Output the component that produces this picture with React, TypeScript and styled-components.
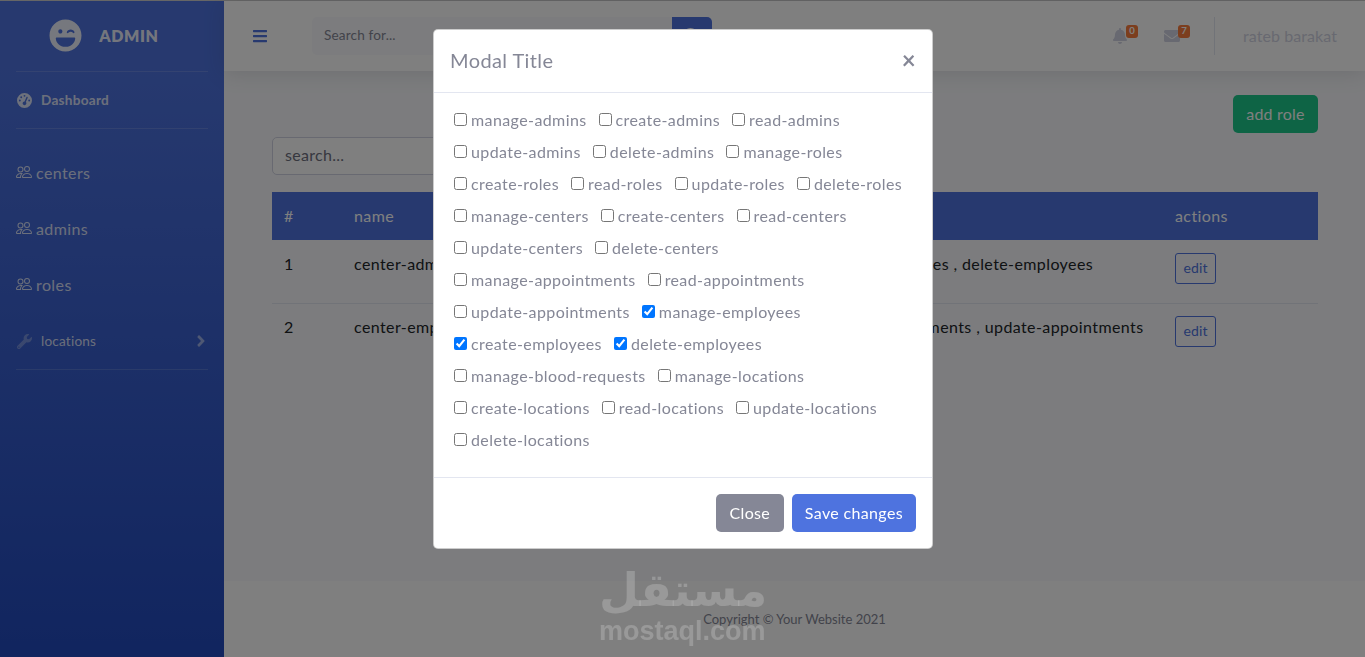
import React from "react";
import styled, { createGlobalStyle } from "styled-components";
import { FaAngleRight, FaBars, FaBell, FaEnvelope, FaLaughWink, FaSearch, FaWrench } from "react-icons/fa";
import { FaGaugeHigh } from "react-icons/fa6";
import { BsPeople } from "react-icons/bs";

const GlobalStyle = createGlobalStyle`
    html, body {
        margin: 0;
        height: 100%;
        overflow: hidden;
        font-family: "Lato", "Noto Sans", "Liberation Sans", sans-serif;
        font-size: 16px;
        letter-spacing: 0.4px;
        color: #858796;
        background: #f8f9fc;
    }
    * {
        box-sizing: border-box;
    }
`;

const Wrapper = styled.div`
    display: flex;
    height: 657px;
    border-top: 1px solid #ccc;
`;

const Sidebar = styled.aside`
    width: 224px;
    flex-shrink: 0;
    padding: 0 16px;
    background: linear-gradient(180deg, #4e73df 10%, #224abe 100%);
    color: rgba(255, 255, 255, 0.8);
`;

const Brand = styled.div`
    height: 70px;
    display: flex;
    align-items: center;
    justify-content: center;
    gap: 17px;
    color: rgba(255, 255, 255, 0.9);
    font-size: 16px;
    font-weight: 800;
    letter-spacing: 0.6px;
    padding: 0 16px 2px 0;
`;

const Divider = styled.hr`
    margin: 0;
    border: 0;
    border-top: 1px solid rgba(255, 255, 255, 0.15);
`;

const DashboardItem = styled.div`
    height: 56px;
    display: flex;
    align-items: center;
    gap: 9px;
    padding-left: 1px;
    font-size: 13.6px;
    font-weight: 700;
    letter-spacing: 0.25px;
`;

const NavGroup = styled.nav`
    padding-top: 16px;
`;

const NavItem = styled.div`
    height: 56px;
    display: flex;
    align-items: center;
    gap: 4px;
    padding-bottom: 2px;
    font-size: 16px;
`;

const SmallNavItem = styled(NavItem)`
    font-size: 13.6px;
    gap: 9px;
    padding: 0 0 0 1px;
    letter-spacing: 0.2px;
`;

const DimWrench = styled(FaWrench)`
    color: rgba(255, 255, 255, 0.3);
`;

const NavChevron = styled(FaAngleRight)`
    margin-left: auto;
    margin-right: -2px;
    color: rgba(255, 255, 255, 0.5);
`;

const Main = styled.div`
    flex: 1;
    min-width: 0;
    display: flex;
    flex-direction: column;
`;

const Topbar = styled.header`
    height: 70px;
    display: flex;
    align-items: center;
    background: #fff;
    box-shadow: 0 2px 20px rgba(58, 59, 69, 0.15);
    padding: 0 28px;
`;

const MenuButton = styled.div`
    color: #4e73df;
    display: flex;
    margin-right: 44px;
`;

const SearchGroup = styled.div`
    width: 400px;
    height: 38px;
    display: flex;
    background: #f8f9fc;
    border-radius: 5px;
    overflow: hidden;
`;

const SearchText = styled.div`
    flex: 1;
    padding-left: 12px;
    font-size: 13.6px;
    line-height: 36px;
    letter-spacing: 0.15px;
    color: #858796;
`;

const SearchButton = styled.div`
    width: 40px;
    display: flex;
    align-items: center;
    justify-content: center;
    background: #4e73df;
    color: #fff;
`;

const TopActions = styled.div`
    margin-left: auto;
    display: flex;
    align-items: center;
`;

const Alert = styled.div`
    position: relative;
    width: 52px;
    display: flex;
    justify-content: center;
    color: #d1d3e2;
`;

const Badge = styled.span`
    position: absolute;
    top: -3px;
    left: 32px;
    min-width: 12px;
    height: 13px;
    padding: 0 3px;
    border-radius: 3px;
    background: #f97c3c;
    color: #fff;
    font-size: 9.6px;
    font-weight: 700;
    letter-spacing: 0;
    line-height: 12px;
    text-align: center;
`;

const TopDivider = styled.div`
    width: 1px;
    height: 38px;
    margin: 0 28px 0 16px;
    background: #e3e6f0;
`;

const UserName = styled.span`
    color: #d1d3e2;
    letter-spacing: 0.08px;
    padding-bottom: 2px;
`;

const Content = styled.main`
    flex: 1;
    padding: 24px 47px 0 48px;
`;

const AddRow = styled.div`
    display: flex;
    justify-content: flex-end;
    margin-bottom: 4px;
`;

const AddButton = styled.div`
    min-width: 85px;
    height: 38px;
    padding: 0 13px 2px;
    display: flex;
    align-items: center;
    justify-content: center;
    border-radius: 5px;
    background: #1cc88a;
    color: #fff;
    letter-spacing: 0.2px;
`;

const SearchInput = styled.div`
    width: 300px;
    height: 38px;
    padding-left: 12px;
    margin-bottom: 17px;
    border: 1px solid #d1d3e2;
    border-radius: 5px;
    background: #fff;
    line-height: 34px;
    letter-spacing: 0.3px;
    color: #6e707e;
`;

const Table = styled.table`
    width: 100%;
    table-layout: fixed;
    border-collapse: collapse;
`;

const HeadRow = styled.tr`
    height: 48px;
    background: #4e73df;
    color: #fff;
`;

const HeadCell = styled.th<{ $width?: number }>`
    width: ${(p) => (p.$width ? `${p.$width}px` : "auto")};
    padding: 0 12px 2px;
    text-align: left;
    font-weight: 400;
`;

const BodyRow = styled.tr`
    height: 63px;
    border-bottom: 1px solid #e3e6f0;

    &:last-child {
        border-bottom: none;
    }

    &:last-child td {
        padding-top: 11px;
    }
`;

const BodyCell = styled.td`
    padding: 12px;
    vertical-align: top;
    color: #212529;
    white-space: nowrap;
    overflow: hidden;
    line-height: 24px;
`;

const EditButton = styled.div`
    width: 41px;
    height: 31px;
    margin-top: 1px;
    border: 1px solid #4e73df;
    border-radius: 3px;
    color: #4e73df;
    font-size: 14px;
    letter-spacing: 0.1px;
    line-height: 28px;
    text-align: center;
`;

const Footer = styled.footer`
    height: 76px;
    background: #fff;
    display: flex;
    align-items: center;
    justify-content: center;
    font-size: 13px;
    letter-spacing: 0;
`;

const Backdrop = styled.div`
    position: fixed;
    inset: 0;
    background: rgba(0, 0, 0, 0.5);
`;

const Modal = styled.div`
    position: fixed;
    left: 433px;
    top: 29px;
    width: 500px;
    height: 520px;
    display: flex;
    flex-direction: column;
    background: #fff;
    border: 1px solid rgba(0, 0, 0, 0.2);
    border-radius: 5px;
`;

const ModalHeader = styled.div`
    height: 63px;
    flex-shrink: 0;
    display: flex;
    align-items: center;
    justify-content: space-between;
    padding: 0 16px 3px;
    border-bottom: 1px solid #e3e6f0;
`;

const ModalTitle = styled.h5`
    margin: 0;
    font-size: 20px;
    font-weight: 400;
`;

const CloseIcon = styled.span`
    font-size: 24px;
    font-weight: 700;
    color: #858796;
    line-height: 1;
`;

const ModalBody = styled.div`
    flex: 1;
    padding: 10px 20px;
`;

const PermRow = styled.div`
    height: 32px;
    display: flex;
    align-items: center;
    gap: 12px;
`;

const Perm = styled.label`
    display: flex;
    align-items: center;
    gap: 4px;
`;

const Check = styled.input`
    width: 13px;
    height: 13px;
    margin: 0;
`;

const ModalFooter = styled.div`
    height: 71px;
    flex-shrink: 0;
    display: flex;
    align-items: center;
    justify-content: flex-end;
    gap: 8px;
    padding: 0 16px;
    border-top: 1px solid #e3e6f0;
`;

const ModalButton = styled.div<{ $primary?: boolean }>`
    min-width: 68px;
    height: 38px;
    padding: 0 13px 2px;
    display: flex;
    align-items: center;
    justify-content: center;
    border-radius: 5px;
    color: #fff;
    letter-spacing: 0.35px;
    background: ${(p) => (p.$primary ? "#4e73df" : "#858796")};
`;

const Watermark = styled.div`
    position: fixed;
    left: 599px;
    top: 562px;
    width: 165px;
    text-align: center;
    color: rgba(255, 255, 255, 0.2);
    font-weight: 700;
    letter-spacing: 0;
    pointer-events: none;
`;

const WatermarkArabic = styled.div`
    font-family: "DejaVu Sans", sans-serif;
    font-size: 46px;
    line-height: 56px;
`;

const WatermarkLatin = styled.div`
    font-family: "Liberation Sans", sans-serif;
    font-size: 27px;
    line-height: 26px;
`;

const permissionRows = [
    ["manage-admins", "create-admins", "read-admins"],
    ["update-admins", "delete-admins", "manage-roles"],
    ["create-roles", "read-roles", "update-roles", "delete-roles"],
    ["manage-centers", "create-centers", "read-centers"],
    ["update-centers", "delete-centers"],
    ["manage-appointments", "read-appointments"],
    ["update-appointments", "manage-employees"],
    ["create-employees", "delete-employees"],
    ["manage-blood-requests", "manage-locations"],
    ["create-locations", "read-locations", "update-locations"],
    ["delete-locations"],
];

const checked = ["manage-employees", "create-employees", "delete-employees"];

const App = () => {
    return (
        <>
            <GlobalStyle />
            <Wrapper>
                <Sidebar>
                    <Brand>
                        <FaLaughWink size={33} />
                        ADMIN
                    </Brand>
                    <Divider />
                    <DashboardItem>
                        <FaGaugeHigh size={15} />
                        Dashboard
                    </DashboardItem>
                    <Divider />
                    <NavGroup>
                        {["centers", "admins", "roles"].map((name) => (
                            <NavItem key={name}>
                                <BsPeople size={16} />
                                {name}
                            </NavItem>
                        ))}
                        <SmallNavItem>
                            <DimWrench size={15} />
                            locations
                            <NavChevron size={18} />
                        </SmallNavItem>
                    </NavGroup>
                    <Divider />
                </Sidebar>
                <Main>
                    <Topbar>
                        <MenuButton>
                            <FaBars size={16} />
                        </MenuButton>
                        <SearchGroup>
                            <SearchText>Search for...</SearchText>
                            <SearchButton>
                                <FaSearch size={16} />
                            </SearchButton>
                        </SearchGroup>
                        <TopActions>
                            <Alert>
                                <FaBell size={16} />
                                <Badge>0</Badge>
                            </Alert>
                            <Alert>
                                <FaEnvelope size={16} />
                                <Badge>7</Badge>
                            </Alert>
                            <TopDivider />
                            <UserName>rateb barakat</UserName>
                        </TopActions>
                    </Topbar>
                    <Content>
                        <AddRow>
                            <AddButton>add role</AddButton>
                        </AddRow>
                        <SearchInput>search...</SearchInput>
                        <Table>
                            <thead>
                                <HeadRow>
                                    <HeadCell $width={70}>#</HeadCell>
                                    <HeadCell $width={300}>name</HeadCell>
                                    <HeadCell>permissions</HeadCell>
                                    <HeadCell $width={155}>actions</HeadCell>
                                </HeadRow>
                            </thead>
                            <tbody>
                                <BodyRow>
                                    <BodyCell>1</BodyCell>
                                    <BodyCell>center-admin</BodyCell>
                                    <BodyCell>manage-employees ,{"\u00a0\u00a0"} create-employees , delete-employees</BodyCell>
                                    <BodyCell>
                                        <EditButton>edit</EditButton>
                                    </BodyCell>
                                </BodyRow>
                                <BodyRow>
                                    <BodyCell>2</BodyCell>
                                    <BodyCell>center-employee</BodyCell>
                                    <BodyCell>manage-appointments , read-appointments , update-appointments</BodyCell>
                                    <BodyCell>
                                        <EditButton>edit</EditButton>
                                    </BodyCell>
                                </BodyRow>
                            </tbody>
                        </Table>
                    </Content>
                    <Footer>Copyright © Your Website 2021</Footer>
                </Main>
            </Wrapper>
            <Backdrop />
            <Modal>
                <ModalHeader>
                    <ModalTitle>Modal Title</ModalTitle>
                    <CloseIcon>×</CloseIcon>
                </ModalHeader>
                <ModalBody>
                    {permissionRows.map((row) => (
                        <PermRow key={row[0]}>
                            {row.map((name) => (
                                <Perm key={name}>
                                    <Check type="checkbox" defaultChecked={checked.includes(name)} />
                                    {name}
                                </Perm>
                            ))}
                        </PermRow>
                    ))}
                </ModalBody>
                <ModalFooter>
                    <ModalButton>Close</ModalButton>
                    <ModalButton $primary>Save changes</ModalButton>
                </ModalFooter>
            </Modal>
            <Watermark>
                <WatermarkArabic>مستقل</WatermarkArabic>
                <WatermarkLatin>mostaql.com</WatermarkLatin>
            </Watermark>
        </>
    );
};

export default App;
